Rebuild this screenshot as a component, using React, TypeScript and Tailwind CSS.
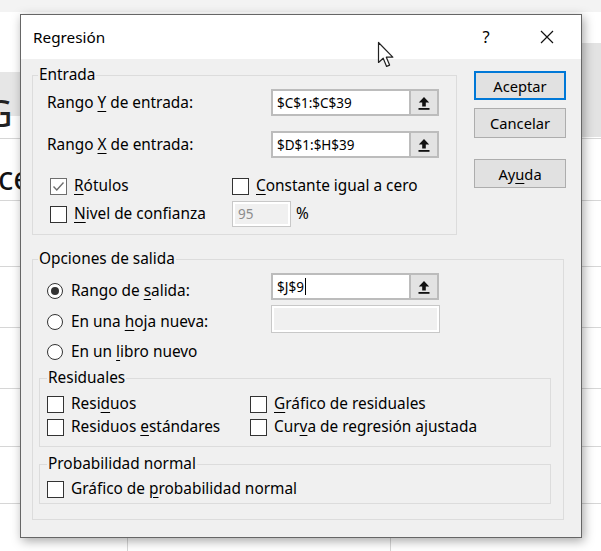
import React from "react";

function U({ children }: { children: React.ReactNode }) {
  return <span className="underline underline-offset-[3px] decoration-1">{children}</span>;
}

function Check({ checked = false }: { checked?: boolean }) {
  return (
    <span
      className={
        "flex h-[17px] w-[17px] shrink-0 items-center justify-center bg-white border " +
        (checked ? "border-[#6e6e6e]" : "border-[#333333]")
      }
    >
      {checked && (
        <svg width="13" height="11" viewBox="0 0 13 11">
          <path d="M1.5 5.5 L4.8 9 L11.5 1.5" fill="none" stroke="#6e6e6e" strokeWidth="1.4" />
        </svg>
      )}
    </span>
  );
}

function Radio({ checked = false }: { checked?: boolean }) {
  return (
    <span className="flex h-[16px] w-[16px] shrink-0 items-center justify-center rounded-full border border-[#333333] bg-white">
      {checked && <span className="h-[8px] w-[8px] rounded-full bg-[#333333]" />}
    </span>
  );
}

function UpArrow() {
  return (
    <svg width="12" height="14" viewBox="0 0 12 14">
      <path d="M6 1 L11.2 6.6 L7.8 6.6 L7.8 10.6 L4.2 10.6 L4.2 6.6 L0.8 6.6 Z" fill="#111" />
      <rect x="0.5" y="12" width="11" height="1.8" fill="#111" />
    </svg>
  );
}

function RefInput({ value, caret = false }: { value: string; caret?: boolean }) {
  return (
    <div className="flex h-[27px] w-[168px] border-2 border-[#bcbcbc] bg-white">
      <div className="flex flex-1 items-center pl-[4px] text-[13.5px] text-black">
        {value}
        {caret && <span className="ml-[1px] h-[17px] w-[1px] bg-black" />}
      </div>
      <div className="flex w-[28px] items-center justify-center border-l-2 border-[#bcbcbc] bg-[#e3e3e3]">
        <UpArrow />
      </div>
    </div>
  );
}

function DisabledInput({ w, h, value }: { w: string; h: string; value?: string }) {
  return (
    <div className={"border border-[#c8c8c8] bg-white p-[2px] " + w + " " + h}>
      <div className="flex h-full items-center bg-[#f0f0f0] pl-[3px] text-[13.5px] text-[#8c8c8c]">{value}</div>
    </div>
  );
}

function Btn({ children, primary = false, h }: { children: React.ReactNode; primary?: boolean; h: string }) {
  return (
    <div
      className={
        "flex w-[92px] items-center justify-center bg-[#e1e1e1] text-[14.7px] text-black " +
        h +
        " " +
        (primary ? "border-2 border-[#0078d7]" : "border border-[#adadad]")
      }
    >
      {children}
    </div>
  );
}

export default function App() {
  const hLines = [138, 200, 266, 327, 388, 446, 503];
  return (
    <div className="relative h-[551px] w-[601px] overflow-hidden bg-white font-['Noto_Sans',sans-serif] text-[15.4px] leading-[20px] text-black">
      {/* hoja de cálculo de fondo */}
      <div className="absolute inset-0">
        <div className="absolute left-0 top-0 h-[12px] w-full bg-[#f3f3f3]" />
        <div className="absolute left-0 top-[72px] h-[44px] w-[30px] bg-[#e6e6e6]" />
        <div className="absolute right-0 top-[43px] h-[94px] w-[30px] bg-[#e3e3e3]" />
        {hLines.map((y) => (
          <div key={y} className="absolute left-0 h-px w-full bg-[#d6d6d6]" style={{ top: y }} />
        ))}
        <div className="absolute left-[127px] top-[140px] h-[420px] w-px bg-[#d6d6d6]" />
        <div className="absolute left-[390px] top-[140px] h-[420px] w-px bg-[#d6d6d6]" />
        <div className="absolute left-[-15px] top-[88px] text-[38px] leading-[48px] text-[#222]">G</div>
        <div className="absolute left-[-2px] top-[158px] text-[32px] leading-[40px] text-[#111]">ce</div>
      </div>

      {/* diálogo */}
      <div className="absolute left-[20px] top-[14px] flex h-[524px] w-[562px] flex-col border border-[#666666] shadow-[2px_3px_10px_rgba(0,0,0,0.35)]">
        <div className="flex h-[44px] items-center bg-white pl-[12px]">
          <span className="text-[15.3px]">Regresión</span>
          <span className="ml-auto w-[20px] text-center text-[16.5px]">?</span>
          <span className="ml-[28px] mr-[11px] flex w-[46px] items-center justify-center">
            <svg width="14" height="14" viewBox="0 0 14 14">
              <path d="M1 1 L13 13 M13 1 L1 13" stroke="#111" strokeWidth="1.2" />
            </svg>
          </span>
        </div>

        <div className="flex flex-1 flex-col bg-[#f0f0f0] pl-[11px]">
          <div className="flex">
            <fieldset className="mt-[6px] h-[170px] w-[425px] border border-[#dcdcdc] pl-[14px]">
              <legend className="-ml-[9px] px-[1px] text-[15.4px]">Entrada</legend>
              <div className="flex flex-col pt-[4px]">
                <div className="flex h-[27px] items-center">
                  <span className="w-[224px]">
                    Rango <U>Y</U> de entrada:
                  </span>
                  <RefInput value="$C$1:$C$39" />
                </div>
                <div className="mt-[15px] flex h-[27px] items-center">
                  <span className="w-[224px]">
                    Rango <U>X</U> de entrada:
                  </span>
                  <RefInput value="$D$1:$H$39" />
                </div>
                <div className="mt-[18px] flex h-[20px] items-center pl-[3px]">
                  <span className="flex w-[182px] items-center gap-[7px]">
                    <Check checked />
                    <span>
                      <U>R</U>ótulos
                    </span>
                  </span>
                  <span className="flex items-center gap-[7px]">
                    <Check />
                    <span>
                      <U>C</U>onstante igual a cero
                    </span>
                  </span>
                </div>
                <div className="mt-[5px] flex h-[26px] items-center pl-[3px]">
                  <span className="flex w-[182px] items-center gap-[7px]">
                    <Check />
                    <span>
                      <U>N</U>ivel de confianza
                    </span>
                  </span>
                  <DisabledInput w="w-[59px]" h="h-[26px]" value="95" />
                  <span className="ml-[5px]">%</span>
                </div>
              </div>
            </fieldset>

            <div className="ml-[17px] mt-[12px] flex flex-col">
              <Btn primary h="h-[29px]">
                Aceptar
              </Btn>
              <div className="mt-[8px]">
                <Btn h="h-[30px]">Cancelar</Btn>
              </div>
              <div className="mt-[21px]">
                <Btn h="h-[29px]">
                  Ay<U>u</U>da
                </Btn>
              </div>
            </div>
          </div>

          <fieldset className="mt-[14px] w-[532px] border border-[#dcdcdc] pb-[15px] pl-[6px] pr-[12px]">
            <legend className="-ml-[1px] px-[1px] text-[15.4px]">Opciones de salida</legend>
            <div className="flex flex-col pl-[8px] pt-[4px]">
              <div className="flex h-[26px]">
                <span className="flex h-full w-[224px] items-center gap-[8px] pt-[10px]">
                  <Radio checked />
                  <span>
                    Rango de <U>s</U>alida:
                  </span>
                </span>
                <RefInput value="$J$9" caret />
              </div>
              <div className="mt-[6px] flex h-[28px]">
                <span className="flex h-full w-[224px] items-center gap-[8px] pt-[6px]">
                  <Radio />
                  <span>
                    En una <U>h</U>oja nueva:
                  </span>
                </span>
                <DisabledInput w="w-[169px]" h="h-[28px]" />
              </div>
              <div className="mt-[9px] flex h-[20px] items-center gap-[8px]">
                <Radio />
                <span>
                  En un <U>l</U>ibro nuevo
                </span>
              </div>
            </div>

            <fieldset className="mt-[6px] border border-[#dcdcdc] pb-[9px] pl-[7px]">
              <legend className="px-[1px] text-[15.4px]">Residuales</legend>
              <div className="flex flex-col pt-[6px]">
                <div className="flex h-[20px] items-center">
                  <span className="flex w-[203px] items-center gap-[7px]">
                    <Check />
                    <span>
                      Resi<U>d</U>uos
                    </span>
                  </span>
                  <span className="flex items-center gap-[7px]">
                    <Check />
                    <span>
                      <U>G</U>ráfico de residuales
                    </span>
                  </span>
                </div>
                <div className="mt-[3px] flex h-[20px] items-center">
                  <span className="flex w-[203px] items-center gap-[7px]">
                    <Check />
                    <span>
                      Residuos <U>e</U>stándares
                    </span>
                  </span>
                  <span className="flex items-center gap-[7px]">
                    <Check />
                    <span>
                      Cur<U>v</U>a de regresión ajustada
                    </span>
                  </span>
                </div>
              </div>
            </fieldset>

            <fieldset className="mt-[7px] border border-[#dcdcdc] pb-[4px] pl-[7px]">
              <legend className="px-[1px] text-[15.4px]">Probabilidad normal</legend>
              <div className="mt-[5px] flex h-[20px] items-center gap-[7px]">
                <Check />
                <span>
                  Gráfico de <U>p</U>robabilidad normal
                </span>
              </div>
            </fieldset>
          </fieldset>
        </div>
      </div>

      {/* puntero del ratón */}
      <svg className="absolute left-[377px] top-[41px]" width="20" height="28" viewBox="0 0 20 28">
        <path
          d="M1.5 1.5 L1.5 21.5 L6.2 17.2 L9.6 25.4 L12.6 24.1 L9.3 16.2 L15.8 16.2 Z"
          fill="white"
          stroke="#222"
          strokeWidth="1.2"
          strokeLinejoin="round"
        />
      </svg>
    </div>
  );
}
